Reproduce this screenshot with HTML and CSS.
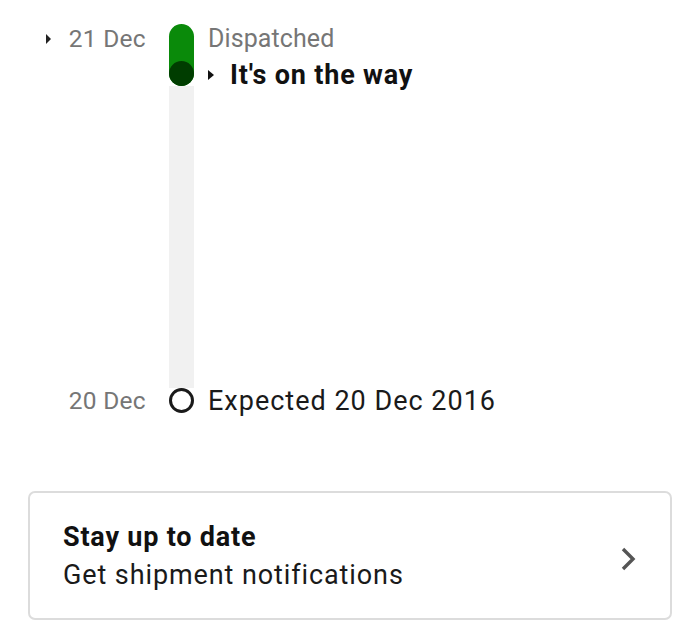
FILE: index.html
```html
<!DOCTYPE html>
<html lang="en">
<head>
  <meta charset="UTF-8" />
  <meta name="viewport" content="width=device-width, initial-scale=1" />
  <title>Order tracking</title>
  <link rel="stylesheet" href="styles.css">
</head>
<body>
  <div class="timeline">
    <div class="date date-first"><span class="caret"></span>21 Dec</div>

    <div class="rail">
      <div class="rail-done"><span class="rail-dot"></span></div>
      <div class="rail-track"></div>
      <div class="rail-ring"></div>
    </div>

    <div class="event">
      <div class="event-label">Dispatched</div>
      <div class="event-title"><span class="caret caret-dark"></span>It's on the way</div>
    </div>

    <div class="date date-last">20 Dec</div>
    <div class="event event-last">Expected 20 Dec 2016</div>
  </div>

  <div class="card">
    <div class="card-text">
      <div class="card-title">Stay up to date</div>
      <div class="card-sub">Get shipment notifications</div>
    </div>
    <svg class="chevron" width="16" height="26" viewBox="0 0 16 26">
      <path d="M3 3 L13 13 L3 23" fill="none" stroke="#555" stroke-width="3.4" />
    </svg>
  </div>
</body>
</html>
```

FILE: styles.css
```css
body {
  margin: 0;
  background: #fff;
  font-family: Roboto, "Noto Sans", Arial, sans-serif;
  color: #1a1a1a;
}

/* === Timeline === */
.timeline {
  display: grid;
  grid-template-columns: 146px 25px 1fr;
  grid-template-rows: 62px 1fr 25px;
  height: 389px;
  padding-top: 24px;
}

.date {
  grid-column: 1;
  font-size: 24.5px;
  letter-spacing: 0.3px;
  color: #767676;
  text-align: right;
  line-height: 30px;
}

.date-first {
  grid-row: 1;
  align-self: start;
}

.date-last {
  grid-row: 3;
  align-self: center;
}

.caret {
  display: inline-block;
  width: 0;
  height: 0;
  border-left: 5px solid #222;
  border-top: 5px solid transparent;
  border-bottom: 5px solid transparent;
  margin-right: 18px;
  vertical-align: 3px;
}

.caret-dark {
  border-left-width: 6px;
  border-left-color: #111;
  margin-right: 16px;
  vertical-align: 4px;
}

.rail {
  grid-column: 2;
  grid-row: 1 / 4;
  margin-left: 23px;
  width: 25px;
  display: flex;
  flex-direction: column;
}

.rail-done {
  height: 62px;
  background: #0a8a0a;
  border-radius: 13px;
  position: relative;
}

.rail-dot {
  position: absolute;
  left: 0;
  bottom: 0;
  width: 25px;
  height: 25px;
  border-radius: 50%;
  background: #003d00;
}

.rail-track {
  flex: 1;
  background: #f1f1f1;
}

.rail-ring {
  width: 25px;
  height: 25px;
  box-sizing: border-box;
  border: 3.5px solid #1a1a1a;
  border-radius: 50%;
  background: #fff;
}

.event {
  grid-column: 3;
  grid-row: 1;
  padding-left: 37px;
}

.event-label {
  font-size: 25px;
  letter-spacing: 0.1px;
  color: #767676;
  line-height: 30px;
}

.event-title {
  font-size: 27px;
  letter-spacing: 0.8px;
  font-weight: bold;
  color: #111;
  line-height: 30px;
  margin-top: 6px;
}

.event-last {
  grid-row: 3;
  align-self: center;
  font-size: 27px;
  letter-spacing: 1px;
  color: #1a1a1a;
  line-height: 30px;
}

/* === Card === */
.card {
  margin: 78px 28px 0 28px;
  height: 129px;
  box-sizing: border-box;
  border: 2px solid #dcdcdc;
  border-radius: 7px;
  display: flex;
  align-items: center;
  justify-content: space-between;
  padding: 0 34px 0 33px;
}

.card-title {
  font-size: 27px;
  letter-spacing: 0.8px;
  font-weight: bold;
  color: #111;
  line-height: 34px;
}

.card-sub {
  font-size: 27px;
  letter-spacing: 0.9px;
  color: #1a1a1a;
  line-height: 34px;
  margin-top: 4px;
}

.chevron {
  display: block;
  margin-top: 6px;
}
```
